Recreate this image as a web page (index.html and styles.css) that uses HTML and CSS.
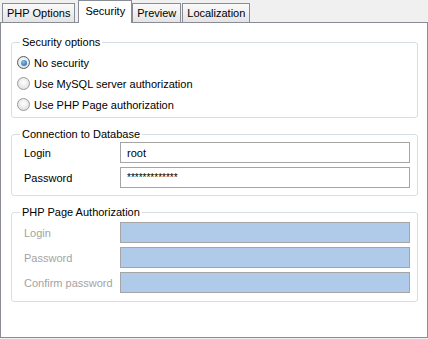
FILE: index.html
```html
<!DOCTYPE html>
<html lang="en">
<head>
  <meta charset="UTF-8">
  <title>Security</title>
  <link rel="stylesheet" href="styles.css">
</head>
<body>
  <div class="tabs">
    <div class="tab">PHP Options</div>
    <div class="tab active">Security</div>
    <div class="tab">Preview</div>
    <div class="tab">Localization</div>
  </div>

  <div class="panel">
    <fieldset class="group options">
      <legend>Security options</legend>
      <label class="radio"><span class="dot checked"></span>No security</label>
      <label class="radio"><span class="dot"></span>Use MySQL server authorization</label>
      <label class="radio"><span class="dot"></span>Use PHP Page authorization</label>
    </fieldset>

    <fieldset class="group conn">
      <legend>Connection to Database</legend>
      <div class="row">
        <span class="lbl">Login</span>
        <input class="field" type="text" value="root" spellcheck="false">
      </div>
      <div class="row">
        <span class="lbl">Password</span>
        <input class="field stars" type="text" value="*************" spellcheck="false">
      </div>
    </fieldset>

    <fieldset class="group auth">
      <legend>PHP Page Authorization</legend>
      <div class="row">
        <span class="lbl off">Login</span>
        <input class="field disabled" type="text" disabled>
      </div>
      <div class="row">
        <span class="lbl off">Password</span>
        <input class="field disabled" type="text" disabled>
      </div>
      <div class="row">
        <span class="lbl off">Confirm password</span>
        <input class="field disabled" type="text" disabled>
      </div>
    </fieldset>
  </div>
</body>
</html>
```

FILE: styles.css
```css
body {
  margin: 0;
  background-color: #f0f0f0;
  font-family: "Liberation Sans", Arial, sans-serif;
  font-size: 11px;
  color: #000;
}
.tabs {
  display: flex;
  align-items: flex-end;
  height: 22px;
  padding-left: 2px;
}
.tab {
  height: 19px;
  line-height: 19px;
  padding: 0 4px;
  border: 1px solid #898c95;
  border-bottom: none;
  margin-right: 1px;
  background: linear-gradient(#fafafa, #e4e4e4);
  box-sizing: border-box;
  white-space: nowrap;
}
.tab.active {
  height: 23px;
  line-height: 20px;
  padding: 0 6px;
  margin: 0 0 -1px 2px;
  background: #fff;
  position: relative;
  z-index: 1;
}
.panel {
  height: 316px;
  box-sizing: border-box;
  border: 1px solid #898c95;
  background: #fff;
  padding-top: 12px;
}
.group {
  margin: 0 9px 0 10px;
  border: 1px solid #d5dfe5;
  border-radius: 3px;
  padding: 0 7px 0 5px;
}
.group legend {
  padding: 0 2px;
  margin-left: 3px;
  line-height: 14px;
}
.options {
  padding-top: 3px;
  padding-bottom: 2px;
}
.radio {
  display: flex;
  align-items: center;
  height: 21px;
}
.dot {
  width: 11px;
  height: 11px;
  border: 1px solid #9a9a9a;
  border-radius: 50%;
  background: radial-gradient(circle at 50% 40%, #ffffff, #d8d8d8);
  margin-right: 4px;
  display: inline-flex;
  align-items: center;
  justify-content: center;
}
.dot.checked {
  border-color: #5a5a5a;
}
.dot.checked::after {
  content: "";
  width: 6px;
  height: 6px;
  border-radius: 50%;
  background: radial-gradient(circle at 40% 35%, #7cc4f4, #1a5c9c);
}
.conn {
  margin-top: 9px;
  padding-top: 1px;
  padding-bottom: 7px;
}
.auth {
  margin-top: 9px;
  padding-top: 3px;
  padding-bottom: 8px;
}
.row {
  display: grid;
  grid-template-columns: 96px 1fr;
  align-items: center;
  margin-bottom: 4px;
  padding-left: 7px;
}
.row:last-child {
  margin-bottom: 0;
}
.lbl {
  white-space: nowrap;
}
.lbl.off {
  color: #a3a3a3;
}
.field {
  height: 21px;
  box-sizing: border-box;
  border: 1px solid #a5a5a5;
  padding: 0 6px;
  margin: 0;
  font-family: "Liberation Sans", Arial, sans-serif;
  font-size: 11px;
  color: #000;
  background: #fff;
  width: 100%;
}
.field.stars {
  font-size: 10px;
}
.field.disabled {
  background: #b0cbe9;
  border-color: #a5a5a5;
}
```
